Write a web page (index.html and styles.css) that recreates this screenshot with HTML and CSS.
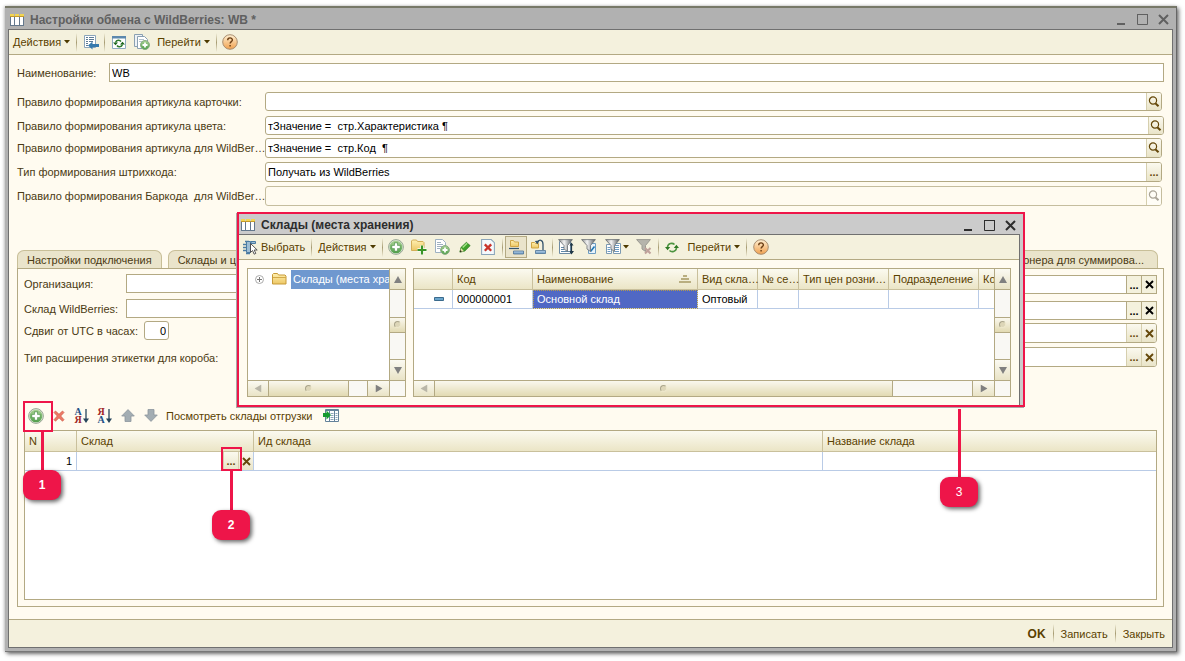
FILE: index.html
```html
<!DOCTYPE html>
<html lang="ru">
<head>
<meta charset="utf-8">
<title>Настройки обмена с WildBerries: WB</title>
<link rel="stylesheet" href="styles.css">
</head>
<body>
<svg class="sprite" aria-hidden="true">
  <defs>
    <linearGradient id="g-green" x1="0" y1="0" x2="0" y2="1"><stop offset="0" stop-color="#a9d193"/><stop offset="1" stop-color="#4f9f4a"/></linearGradient>
    <linearGradient id="g-orange" x1="0" y1="0" x2="0" y2="1"><stop offset="0" stop-color="#fff0d2"/><stop offset="1" stop-color="#f0a04e"/></linearGradient>
    <linearGradient id="g-folder" x1="0" y1="0" x2="0" y2="1"><stop offset="0" stop-color="#fff0b0"/><stop offset="1" stop-color="#edc765"/></linearGradient>
    <linearGradient id="g-blue" x1="0" y1="0" x2="0" y2="1"><stop offset="0" stop-color="#b6cfe6"/><stop offset="1" stop-color="#6f9cc4"/></linearGradient>
    <linearGradient id="g-gray" x1="0" y1="0" x2="1" y2="0"><stop offset="0" stop-color="#8c8c8c"/><stop offset=".4" stop-color="#f4f4f4"/><stop offset="1" stop-color="#555a60"/></linearGradient>
  </defs>
  <symbol id="i-table" viewBox="0 0 14 12"><path d="M0 2h14v10H0z" fill="#64788c"/><path d="M1 3h3v8H1zM5 3h4v8H5zM10 3h3v8h-3z" fill="#fff"/><path d="M0 0h4v2H0zM5 0h4v2H5zM10 0h4v2h-4z" fill="#f2d552"/><path d="M0 2h14v1H0z" fill="#c49a2c"/></symbol>
  <symbol id="i-caret" viewBox="0 0 6 4"><path d="M0 0h6L3 3.5z" fill="#4d3a00"/></symbol>
  <symbol id="i-goto" viewBox="0 0 16 16"><path d="M1.500 1.500h11v12h-11z" fill="#fff" stroke="#8aa4ba"/><path d="M3 3.500h2M6 3.500h5M3 5.500h2M6 5.500h5M3 7.500h2M6 7.500h4M3 9.500h2M3 11.500h2" stroke="#5c7a94"/><path d="M5 11.500L9.500 7.500v2.500H16v3H9.500v2.500z" fill="#3579ac"/></symbol>
  <symbol id="i-rewin" viewBox="0 0 14 13"><path d="M.5.5h13v12H.5z" fill="#fff" stroke="#8fabc2"/><path d="M0 0h14v2.500H0z" fill="#5c88ad"/><path d="M3.500 6.500c1-3 4.500-2.500 5.500-1M10.500 8.500c-1 3-4.500 2.500-5.500 1" fill="none" stroke="#2b7a2b" stroke-width="1.500"/><path d="M1 6.500h5L3.500 9.300zM8 8.500h5L10.500 5.700z" fill="#1c651c"/></symbol>
  <symbol id="i-docs" viewBox="0 0 16 16"><path d="M.5.5h8v12h-8z" fill="#eef2f6" stroke="#8aa0b2"/><path d="M3.500 2.500h7l3 3v9h-10z" fill="#fff" stroke="#8aa0b2"/><path d="M5 5.500h5M5 7.500h5" stroke="#b3c2ce"/><circle cx="11" cy="11" r="4.500" fill="url(#g-green)" stroke="#8aae86"/><path d="M8.500 11h5M11 8.500v5" stroke="#fff" stroke-width="1.800"/></symbol>
  <symbol id="i-help" viewBox="0 0 16 16"><circle cx="8" cy="8" r="7.300" fill="url(#g-orange)" stroke="#a98e70"/><path d="M5.700 6.200c0-3 4.700-3 4.700-.2 0 1.600-2.300 1.700-2.300 3.600M8.100 11v1.500" fill="none" stroke="#6b3e14" stroke-width="1.400"/></symbol>
  <symbol id="i-mag" viewBox="0 0 12 12"><circle cx="5" cy="4.500" r="3.600" fill="none" stroke="currentColor" stroke-width="1.200"/><path d="M7.300 7.200L10.500 10.300" stroke="currentColor" stroke-width="2"/></symbol>
  <symbol id="i-x" viewBox="0 0 9 9"><path d="M1 1l7 7M8 1L1 8" stroke="currentColor" stroke-width="1.900"/></symbol>
  <symbol id="i-plus" viewBox="0 0 16 16"><circle cx="8" cy="8" r="7.400" fill="#dfe8d6" stroke="#8f9f8c" stroke-width=".9"/><circle cx="8" cy="8" r="6.300" fill="url(#g-green)"/><path d="M3.600 8h8.800M8 3.600v8.800" stroke="#5a9a55" stroke-width="4"/><path d="M4.200 8h7.600M8 4.200v7.600" stroke="#fff" stroke-width="2.400"/></symbol>
  <symbol id="i-del" viewBox="0 0 12 12"><path d="M1 2.500L2.500 1 6 4.300 9.500 1 11 2.500 7.700 6 11 9.700 9.500 11.200 6 7.800 2.500 11.200 1 9.700 4.300 6z" fill="#ee7a66" stroke="#cc5544" stroke-width=".7"/></symbol>
  <symbol id="i-down" viewBox="0 0 6 16"><path d="M3 1v12" stroke="#26455c" stroke-width="1.300"/><path d="M0 10.500h6L3 15z" fill="#26455c"/></symbol>
  <symbol id="i-up-arrow" viewBox="0 0 14 13"><path d="M7 .6L13.300 7H10v5.500H4V7H.7z" fill="#a3adb3" stroke="#8b969d" stroke-width=".8"/></symbol>
  <symbol id="i-grid-go" viewBox="0 0 16 14"><path d="M2.500.5h13v12h-13z" fill="#fff" stroke="#64829a"/><path d="M2 1.500h14M6.500 1v12M11.500 1v12" stroke="#64829a"/><path d="M7.500 4.500h3M7.500 6.500h3M7.500 8.500h3M7.500 10.500h3M12.500 4.500h2M12.500 6.500h2M12.500 8.500h2M12.500 10.500h2" stroke="#8da5b8"/><path d="M0 4h3.500V1.500L8 6l-4.500 4.500V8H0z" fill="#159a2f"/></symbol>
  <symbol id="i-pick" viewBox="0 0 15 15"><path d="M0 4.500h4M0 7.500h4M0 10.500h4M2 1.500h4M3 13.500h4" stroke="#4a7ba2" stroke-width="1.600"/><path d="M3.500 1.500h4v11h-4z" fill="#9dbdd4" stroke="#4a7ba2"/><path d="M8 1.500h4.500v2H8z" fill="#9dbdd4" stroke="#4a7ba2"/><path d="M7.500 3.500v9l2-2 1.700 3.700 1.600-.8-1.600-3.400h3z" fill="#fff" stroke="#444" stroke-width=".9"/></symbol>
  <symbol id="i-folder" viewBox="0 0 15 12"><path d="M.5 11V1.500l1-1h4l1 1.500h6.500l1 1V11z" fill="url(#g-folder)" stroke="#c79a38"/><path d="M1 4.500h13" stroke="#d3aa4a"/></symbol>
  <symbol id="i-folder-add" viewBox="0 0 16 15"><path d="M.5 11V1.500l1-1h4l1 1.500H12l1 1V11z" fill="url(#g-folder)" stroke="#d3ae58"/><path d="M6.500 10.500h9M11 6v9" stroke="#fff" stroke-width="3.600"/><path d="M6.500 10.500h9M11 6v9" stroke="#3a9427" stroke-width="2.200"/></symbol>
  <symbol id="i-doc-add" viewBox="0 0 16 16"><path d="M1.500.5h7l3 3v10h-10z" fill="#fff" stroke="#9db1c2"/><path d="M3 3.500h4M3 5.500h6M3 7.500h5M3 9.500h3" stroke="#9fb1c0"/><circle cx="11" cy="11" r="4.400" fill="url(#g-green)" stroke="#8aae86"/><path d="M8.500 11h5M11 8.500v5" stroke="#fff" stroke-width="1.800"/></symbol>
  <symbol id="i-pencil" viewBox="0 0 13 13"><path d="M1 12l1.200-5L8 1.500 12 5l-6 6z" fill="#3fa32c" stroke="#2d7d22"/><path d="M4 7l4.800-4.500" stroke="#a5e588" stroke-width="1.600"/><path d="M2.200 7.500L5.500 11 1 12z" fill="#e8e4b0"/><path d="M.8 12.200l.7-2.400 1.700 1.700z" fill="#302818"/></symbol>
  <symbol id="i-doc-x" viewBox="0 0 13 15"><path d="M.5.5h9l3 3v11H.5z" fill="#f5f9fc" stroke="#8ba5ba"/><path d="M3.500 5l6 6M9.500 5l-6 6" stroke="#c9332a" stroke-width="2.200"/></symbol>
  <symbol id="i-hier" viewBox="0 0 16 16"><path d="M2.500 7.500v-6h3l1 1.500h4v4.500z" fill="url(#g-folder)" stroke="#cfa545"/><path d="M1 9.500h10" stroke="#35546c" stroke-width="1.200"/><path d="M5.500 12h10v3h-10z" fill="url(#g-blue)" stroke="#4b7297" stroke-width=".8"/></symbol>
  <symbol id="i-parent" viewBox="0 0 16 16"><path d="M1.500 9V3.500h3l1 1h3V9z" fill="url(#g-folder)" stroke="#cfa545"/><path d="M7.500 3.500c1.500-3.500 5.500-3 5.500 2V11" fill="none" stroke="#35546c" stroke-width="1.300"/><path d="M4.800 2l4.400-.5L7.500 5.500z" fill="#35546c"/><path d="M5.500 11.500h10v3h-10z" fill="url(#g-blue)" stroke="#4b7297" stroke-width=".8"/></symbol>
  <symbol id="i-f-sort" viewBox="0 0 16 16"><path d="M1.500 2.500h11v12h-11z" fill="#fff" stroke="#6c8aa4"/><path d="M3 8.500h3M3 10.500h3M3 12.500h8" stroke="#5f87a8"/><path d="M.6.600h13.800L9.500 6.500v6L6 10V6.500z" fill="url(#g-gray)" stroke="#666b70" stroke-width=".8"/><path d="M13.500 5v8" stroke="#203746" stroke-width="1.200"/><path d="M11 12h5l-2.500 3.500zM11.500 6.500h4l-2-3z" fill="#203746"/></symbol>
  <symbol id="i-f-edit" viewBox="0 0 16 16"><path d="M7.500 4.500h7v10h-7z" fill="#e8f3fb" stroke="#6c9cc2"/><path d="M9.500 12.500l4-5" stroke="#1f77b5" stroke-width="1.600"/><path d="M.6.600h13.800L9.500 6.500v6L6 10V6.500z" fill="url(#g-gray)" stroke="#666b70" stroke-width=".8"/></symbol>
  <symbol id="i-f-list" viewBox="0 0 16 16"><path d="M1.500 5.500h5v9h-5zM8.500 4.500h7v10h-7z" fill="#fff" stroke="#7c9ab2"/><path d="M2.500 8.500h3M2.500 10.500h3M2.500 12.500h3M10 6.500h4M10 8.500h4M10 10.500h4M10 12.500h4" stroke="#6a9ac2"/><path d="M.6.600h13.800L9.500 6.500v6L6 10V6.500z" fill="url(#g-gray)" stroke="#666b70" stroke-width=".8"/></symbol>
  <symbol id="i-f-off" viewBox="0 0 16 16"><path d="M.6.600h13.800L9.500 6.500v6L6 10V6.500z" fill="#b5b4ac" stroke="#9b9a92"/><path d="M9 9l5.500 5.500M14.500 9L9 14.500" stroke="#bfa19b" stroke-width="2"/></symbol>
  <symbol id="i-refresh" viewBox="0 0 14 12"><path d="M2.500 5.500c.5-4 5-4.500 7-2.500M11.500 6.500c-.5 4-5 4.500-7 2.500" fill="none" stroke="#4c9440" stroke-width="1.600"/><path d="M0 5.500h5.200L2.600 8.800zM8.800 6.500H14l-2.600-3.300z" fill="#2e7a24"/></symbol>
  <symbol id="i-min" viewBox="0 0 11 11"><path d="M1 10h8" stroke="currentColor" stroke-width="2"/></symbol>
  <symbol id="i-max" viewBox="0 0 11 11"><path d="M.5.5h10v10H.5z" fill="none" stroke="currentColor"/><path d="M0 .5h11" stroke="currentColor" stroke-width="1"/></symbol>
  <symbol id="i-close" viewBox="0 0 11 11"><path d="M1 1l9 9M10 1l-9 9" stroke="currentColor" stroke-width="2"/></symbol>
  <symbol id="i-tri" viewBox="0 0 8 7"><path d="M0 7h8L4 0z" fill="currentColor"/></symbol>
  <symbol id="i-expand" viewBox="0 0 9 9"><circle cx="4.500" cy="4.500" r="4" fill="#fff" stroke="#aaa"/><path d="M2 4.500h5M4.500 2v5" stroke="#777"/></symbol>
  <symbol id="i-asc" viewBox="0 0 12 8"><path d="M4 0h4v2H4zM2 3h8v2H2zM0 6h12v2H0z" fill="#b9ae80"/></symbol>
  <symbol id="i-item" viewBox="0 0 10 4"><path d="M.5.5h9v3h-9z" fill="#6aa5cc" stroke="#3b6a8c"/></symbol>
</svg>

<main class="window">
  <header class="titlebar">
    <svg class="title-icon"><use href="#i-table"/></svg>
    <h1>Настройки обмена с WildBerries: WB *</h1>
    <button class="win-btn" aria-label="Свернуть"><svg><use href="#i-min"/></svg></button>
    <button class="win-btn" aria-label="Развернуть"><svg><use href="#i-max"/></svg></button>
    <button class="win-btn" aria-label="Закрыть окно"><svg><use href="#i-close"/></svg></button>
  </header>
  <div class="client">
    <nav class="toolbar">
      <button class="tb-text">Действия<svg class="caret"><use href="#i-caret"/></svg></button>
      <span class="sep"></span>
      <button class="tb-icon" aria-label="Перейти к списку"><svg><use href="#i-goto"/></svg></button>
      <span class="sep"></span>
      <button class="tb-icon" aria-label="Перечитать"><svg class="s14"><use href="#i-rewin"/></svg></button>
      <button class="tb-icon" aria-label="Скопировать"><svg><use href="#i-docs"/></svg></button>
      <button class="tb-text">Перейти<svg class="caret"><use href="#i-caret"/></svg></button>
      <span class="sep"></span>
      <button class="tb-icon" aria-label="Справка"><svg><use href="#i-help"/></svg></button>
    </nav>

    <form class="form" onsubmit="return false">
      <div class="row row-name">
        <label for="name">Наименование:</label>
        <div class="field square"><input id="name" value="WB"></div>
      </div>
      <div class="rules">
        <div class="row">
          <label for="r1">Правило формирования артикула карточки:</label>
          <div class="field"><input id="r1" value=""><button aria-label="Открыть"><svg><use href="#i-mag"/></svg></button></div>
        </div>
        <div class="row row-wide">
          <label for="r2">Правило формирования артикула цвета:</label>
          <div class="field"><input id="r2" value="тЗначение =  стр.Характеристика ¶"><button aria-label="Открыть"><svg><use href="#i-mag"/></svg></button></div>
        </div>
      </div>
      <div class="rules tall">
        <div class="row">
          <label for="r3">Правило формирования артикула для WildBer…</label>
          <div class="field"><input id="r3" value="тЗначение =  стр.Код  ¶"><button aria-label="Открыть"><svg><use href="#i-mag"/></svg></button></div>
        </div>
        <div class="row">
          <label for="r4">Тип формирования штрихкода:</label>
          <div class="field"><input id="r4" value="Получать из WildBerries"><button aria-label="Выбрать">...</button></div>
        </div>
        <div class="row">
          <label for="r5">Правило формирования Баркода&nbsp; для WildBer…</label>
          <div class="field disabled"><input id="r5" disabled><button disabled aria-label="Открыть"><svg><use href="#i-mag"/></svg></button></div>
        </div>
      </div>
    </form>

    <div class="tabs">
      <button class="tab">Настройки подключения</button>
      <button class="tab tab-stock">Склады и ц</button>
      <button class="tab tab-last">онера для суммирова...</button>
    </div>

    <section class="panel">
      <div class="settings">
        <div class="col">
          <div class="row"><label class="l-org" for="org">Организация:</label><div class="field square"><input id="org"></div></div>
          <div class="row second"><label class="l-org" for="wh">Склад WildBerries:</label><div class="field square"><input id="wh"></div></div>
          <div class="row third"><label class="l-utc" for="utc">Сдвиг от UTC в часах:</label><div class="field number"><input id="utc" value="0"></div></div>
          <div class="row fourth"><span class="plain">Тип расширения этикетки для короба:</span></div>
        </div>
        <div class="col col-right">
          <div class="row"><div class="field square flat"><input aria-label="Договор"><button aria-label="Выбрать">...</button><button aria-label="Очистить"><svg class="x"><use href="#i-x"/></svg></button></div></div>
          <div class="row second"><div class="field square flat"><input aria-label="Контрагент"><button aria-label="Выбрать">...</button><button aria-label="Очистить"><svg class="x"><use href="#i-x"/></svg></button></div></div>
          <div class="row third"><div class="field"><input aria-label="Номенклатура"><button aria-label="Выбрать">...</button><button aria-label="Очистить"><svg class="x"><use href="#i-x"/></svg></button></div></div>
          <div class="row fourth"><div class="field"><input aria-label="Тип этикетки"><button aria-label="Выбрать">...</button><button aria-label="Очистить"><svg class="x"><use href="#i-x"/></svg></button></div></div>
        </div>
      </div>

      <div class="commands">
        <span class="anchor">
          <button class="tb-icon" aria-label="Добавить"><svg><use href="#i-plus"/></svg></button>
          <span class="frame frame-add"></span><span class="stem stem-add"></span><b class="badge badge-add">1</b>
        </span>
        <button class="tb-icon" aria-label="Удалить"><svg class="s12"><use href="#i-del"/></svg></button>
        <button class="tb-icon sort" aria-label="По возрастанию"><span class="letters"><i class="blue">А</i><i class="red">Я</i></span><svg class="arrow"><use href="#i-down"/></svg></button>
        <button class="tb-icon sort" aria-label="По убыванию"><span class="letters"><i class="red">Я</i><i class="blue">А</i></span><svg class="arrow"><use href="#i-down"/></svg></button>
        <button class="tb-icon" aria-label="Вверх"><svg class="s14"><use href="#i-up-arrow"/></svg></button>
        <button class="tb-icon flip" aria-label="Вниз"><svg class="s14"><use href="#i-up-arrow"/></svg></button>
        <button class="tb-text show">Посмотреть склады отгрузки<svg class="grid-go"><use href="#i-grid-go"/></svg></button>
      </div>

      <div class="grid-box">
        <table class="grid">
          <colgroup><col class="c-n"><col class="c-stock"><col class="c-id"><col></colgroup>
          <thead><tr><th>N</th><th>Склад</th><th>Ид склада</th><th>Название склада</th></tr></thead>
          <tbody><tr><td class="num">1</td><td class="edit"><div class="cell-edit">
            <span class="anchor"><button aria-label="Выбрать склад">...</button><span class="frame frame-pick"></span><span class="stem stem-pick"></span><b class="badge badge-pick">2</b></span><button aria-label="Очистить склад"><svg class="x"><use href="#i-x"/></svg></button>
          </div></td><td></td><td></td></tr></tbody>
        </table>
      </div>
    </section>

    <footer class="footer">
      <button class="ok">OK</button><span class="sep"></span><button>Записать</button><span class="sep"></span><button>Закрыть</button>
    </footer>
  </div>

  <section class="modal" role="dialog" aria-labelledby="modal-title">
    <header class="titlebar">
      <svg class="title-icon"><use href="#i-table"/></svg>
      <h2 id="modal-title">Склады (места хранения)</h2>
      <button class="win-btn" aria-label="Свернуть"><svg><use href="#i-min"/></svg></button>
      <button class="win-btn" aria-label="Развернуть"><svg><use href="#i-max"/></svg></button>
      <button class="win-btn" aria-label="Закрыть окно"><svg><use href="#i-close"/></svg></button>
    </header>
    <div class="modal-client">
      <nav class="toolbar">
        <button class="tb-text"><svg class="pick"><use href="#i-pick"/></svg>Выбрать</button>
        <span class="sep"></span>
        <button class="tb-text">Действия<svg class="caret"><use href="#i-caret"/></svg></button>
        <span class="sep"></span>
        <button class="tb-icon" aria-label="Добавить"><svg><use href="#i-plus"/></svg></button>
        <button class="tb-icon" aria-label="Новая группа"><svg><use href="#i-folder-add"/></svg></button>
        <button class="tb-icon" aria-label="Скопировать"><svg><use href="#i-doc-add"/></svg></button>
        <button class="tb-icon" aria-label="Изменить"><svg class="s12"><use href="#i-pencil"/></svg></button>
        <button class="tb-icon" aria-label="Пометить на удаление"><svg><use href="#i-doc-x"/></svg></button>
        <span class="sep"></span>
        <button class="tb-icon pressed" aria-label="Иерархия"><svg><use href="#i-hier"/></svg></button>
        <button class="tb-icon" aria-label="На уровень вверх"><svg><use href="#i-parent"/></svg></button>
        <span class="sep"></span>
        <button class="tb-icon" aria-label="Отбор и сортировка"><svg><use href="#i-f-sort"/></svg></button>
        <button class="tb-icon" aria-label="Отбор по значению"><svg><use href="#i-f-edit"/></svg></button>
        <button class="tb-icon with-caret" aria-label="История отборов"><svg><use href="#i-f-list"/></svg><svg class="caret"><use href="#i-caret"/></svg></button>
        <button class="tb-icon" aria-label="Отключить отбор"><svg><use href="#i-f-off"/></svg></button>
        <span class="sep"></span>
        <button class="tb-icon" aria-label="Обновить"><svg class="s14"><use href="#i-refresh"/></svg></button>
        <button class="tb-text">Перейти<svg class="caret"><use href="#i-caret"/></svg></button>
        <span class="sep"></span>
        <button class="tb-icon" aria-label="Справка"><svg><use href="#i-help"/></svg></button>
      </nav>
      <div class="panes">
        <div class="pane tree">
          <div class="view">
            <div class="node"><svg class="expand"><use href="#i-expand"/></svg><svg class="folder"><use href="#i-folder"/></svg><span>Склады (места хран</span></div>
          </div>
          <div class="vbar"><button aria-label="Вверх"><svg><use href="#i-tri"/></svg></button><i class="thumb"></i><button class="flip" aria-label="Вниз"><svg><use href="#i-tri"/></svg></button></div>
          <div class="hbar"><button class="left dim" aria-label="Влево"><svg><use href="#i-tri"/></svg></button><i class="thumb"></i><button class="right" aria-label="Вправо"><svg><use href="#i-tri"/></svg></button></div>
          <div class="corner"></div>
        </div>
        <div class="pane list">
          <div class="view">
            <table class="grid">
              <colgroup><col class="m-icon"><col class="m-code"><col class="m-name"><col class="m-kind"><col class="m-no"><col class="m-price"><col class="m-dep"><col></colgroup>
              <thead><tr><th></th><th>Код</th><th><span class="sorted">Наименование<svg class="asc"><use href="#i-asc"/></svg></span></th><th>Вид скла…</th><th>№ се…</th><th>Тип цен розни…</th><th>Подразделение</th><th>Ко</th></tr></thead>
              <tbody><tr><td class="mark"><svg class="item"><use href="#i-item"/></svg></td><td>000000001</td><td class="selected">Основной склад</td><td>Оптовый</td><td></td><td></td><td></td><td></td></tr></tbody>
            </table>
          </div>
          <div class="vbar"><button aria-label="Вверх"><svg><use href="#i-tri"/></svg></button><i class="thumb"></i><button class="flip" aria-label="Вниз"><svg><use href="#i-tri"/></svg></button></div>
          <div class="hbar"><button class="left dim" aria-label="Влево"><svg><use href="#i-tri"/></svg></button><i class="thumb"></i><button class="right" aria-label="Вправо"><svg><use href="#i-tri"/></svg></button></div>
          <div class="corner"></div>
        </div>
      </div>
    </div>
    <span class="stem stem-modal"></span><b class="badge badge-modal">3</b>
  </section>
</main>
</body>
</html>
```
FILE: styles.css
```css
:root {
  --line: #b3a983;
  --cream: #fffbf0;
  --bar: #f4f1dd;
  --ink: #4a3a12;
  --brown: #5a4100;
  --red: #ee1549;
  --cell: #b9cbe6;
}

* { box-sizing: border-box; }

body {
  margin: 0;
  background: #fff;
  color: var(--ink);
  font: 11px/14px "Liberation Sans", Arial, sans-serif;
}

button, input {
  margin: 0;
  padding: 0;
  border: 0;
  background: none;
  color: inherit;
  font: inherit;
}

svg { display: block; flex: none; width: 16px; height: 16px; }
.sprite { position: absolute; width: 0; height: 0; }

/* window */
.window {
  position: relative;
  display: flex;
  flex-direction: column;
  min-height: calc(100vh - 15px);
  margin: 6px 8px 9px 5px;
  padding: 0 3px 3px;
  border-top: 2px solid #777868;
  border-right: 1px solid #666;
  border-bottom: 1px solid #777;
  background: #b1b1b1;
  box-shadow: 2px 2px 4px rgba(0, 0, 0, .55), -1px 0 3px rgba(0, 0, 0, .2);
}

.titlebar {
  display: flex;
  align-items: center;
  gap: 10px;
  height: 21px;
  padding: 2px 4px 0 2px;
  color: #606060;
}

.titlebar h1, .titlebar h2 {
  flex: 1;
  margin: 0;
  font: bold 12px/16px "Liberation Sans", Arial, sans-serif;
}

.title-icon { width: 14px; height: 12px; margin-right: -4px; }
.win-btn svg { width: 11px; height: 11px; }

.client {
  display: flex;
  flex: 1;
  flex-direction: column;
  border: 1px solid #707070;
  background: var(--cream);
}

/* toolbars */
.toolbar {
  display: flex;
  align-items: center;
  height: 25px;
  border-bottom: 1px solid var(--line);
  background: var(--bar);
}

.tb-text {
  display: flex;
  align-items: center;
  gap: 3px;
  padding: 0 4px;
  color: var(--brown);
  white-space: nowrap;
}

.tb-icon {
  display: flex;
  align-items: center;
  justify-content: center;
  width: 23px;
  height: 22px;
}

.caret { width: 6px; height: 4px; }
.s14 { width: 14px; height: 13px; }
.s12 { width: 12px; height: 12px; }
.flip svg { transform: rotate(180deg); }
.sep {
  width: 1px;
  height: 19px;
  margin: 0 2px;
  background: linear-gradient(#f4f1dd, #a89d74, #f4f1dd);
}

/* form */
.form { padding: 8px 8px 0; }
.row { display: flex; align-items: center; height: 19px; }
.row-name label { flex: 0 0 92px; }
.rules { display: grid; gap: 5px; margin-top: 10px; }
.rules.tall { gap: 4px; margin-top: 3px; }
.rules .row { padding-right: 2px; }
.rules .row-wide { padding-right: 0; }
.rules.tall .row { height: 20px; }
.rules label { flex: 0 0 248px; width: 248px; white-space: nowrap; }

.field {
  display: flex;
  flex: 1;
  align-self: stretch;
  min-width: 0;
  border: 1px solid var(--line);
  border-radius: 3px;
  background: #fff;
  overflow: hidden;
}

.field.square { border-radius: 0; }
.field input { flex: 1; min-width: 0; padding: 0 2px; color: #000; }

.field button, .cell-edit button {
  display: flex;
  align-items: center;
  justify-content: center;
  width: 15px;
  border-left: 1px solid #d6cfae;
  background: linear-gradient(#fbf9ef, #e9e4c8);
  color: #65480a;
  font-weight: bold;
}

.field button svg { width: 12px; height: 12px; }
.field .x, .cell-edit .x { width: 9px; height: 9px; }
.field button .x { width: 9px; height: 9px; }
.field.flat button { border-color: var(--line); background: var(--bar); color: #000; }
.field.disabled { border-color: #c5bd9e; background: var(--cream); }
.field.disabled button { color: #aaa497; background: #fffdf6; }

/* tabs */
.tabs { display: flex; gap: 6px; margin: 44px 14px 0 8px; }
.tab {
  height: 18px;
  padding: 0 9px;
  border: 1px solid #c8bf98;
  border-bottom: 0;
  border-radius: 7px 7px 0 0;
  background: #eae4cb;
  white-space: nowrap;
}
.tab-stock { padding-right: 40px; }
.tab-last { margin-left: auto; padding-right: 13px; padding-left: 24px; }

.panel {
  display: flex;
  flex: 1;
  flex-direction: column;
  margin: 0 8px 12px;
  padding: 5px 6px 6px;
  border: 1px solid var(--line);
}

.settings { display: grid; grid-template-columns: 1fr 1fr; gap: 20px; height: 127px; }
.col-right { padding-top: 1px; }
.second { margin-top: 6px; }
.third { margin-top: 3px; }
.fourth { margin-top: 8px; }
.col-right .second { margin-top: 7px; }
.col-right .third { height: 20px; }
.col-right .fourth { height: 20px; margin-top: 4px; }
.l-org { flex: 0 0 102px; }
.l-utc { flex: 0 0 120px; }
.field.number { flex: 0 0 25px; }
.number input { text-align: right; }

.commands { display: flex; align-items: center; height: 29px; }
.anchor { position: relative; display: flex; }
.sort { gap: 1px; }
.letters { display: grid; }
.letters i { font: bold 10px/8px "Liberation Serif", serif; }
.blue { color: #1f4f86; }
.red { color: #a02525; }
.arrow { width: 6px; height: 16px; }
.show { gap: 11px; }
.grid-go { width: 16px; height: 14px; }

/* tables */
.grid-box { flex: 1; border: 1px solid var(--line); background: #fff; }
.grid { width: 100%; border-collapse: separate; border-spacing: 0; table-layout: fixed; }
.grid th {
  height: 21px;
  padding: 0 4px;
  border-right: 1px solid #c9c09c;
  border-bottom: 1px solid #c9c09c;
  background: linear-gradient(#fbfaf0, #ebe5c6);
  color: var(--brown);
  font-weight: normal;
  text-align: left;
  white-space: nowrap;
}
.grid td {
  height: 19px;
  padding: 0 4px;
  border-right: 1px solid var(--cell);
  border-bottom: 1px solid var(--cell);
  color: #000;
  white-space: nowrap;
}
.grid th:last-child, .grid td:last-child { border-right: 0; }
.grid .num { text-align: right; }
.grid .edit { padding: 0; }
.cell-edit { display: flex; justify-content: flex-end; height: 18px; }
.cell-edit button { height: 18px; }
.c-n { width: 52px; }
.c-stock { width: 177px; }
.c-id { width: 569px; }

.footer {
  display: flex;
  align-items: center;
  justify-content: flex-end;
  gap: 5px;
  height: 28px;
  padding-right: 7px;
  border-top: 1px solid var(--line);
  background: var(--bar);
  color: var(--brown);
}
.footer .ok { font-size: 12px; font-weight: bold; }

/* dialog */
.modal {
  position: absolute;
  top: 204px;
  right: 151px;
  left: 232px;
  border: 2px solid var(--red);
  padding-right: 3px;
  background: #cbcbcb;
  box-shadow: -1px 1px 0 #a8a8a8;
}
.modal .titlebar { height: 20px; color: #2d2d2d; }
.modal-client {
  border-top: 1px solid #707070;
  border-right: 1px solid #707070;
  background: var(--cream);
}
.pick { width: 15px; height: 15px; }
.pressed { width: 22px; border: 1px solid var(--line); background: #eae4cb; }
.with-caret { width: 32px; gap: 2px; }

.panes { display: flex; gap: 7px; padding: 8px; }
.pane {
  display: grid;
  grid-template-columns: minmax(0, 1fr) 16px;
  grid-template-rows: 111px 16px;
  border: 1px solid var(--line);
  background: #fff;
}
.tree { flex: 0 0 159px; }
.list { flex: 1; min-width: 0; }
.view { overflow: hidden; }
.node { display: flex; align-items: center; height: 20px; padding-left: 7px; }
.expand { width: 9px; height: 9px; margin-right: 8px; }
.folder { width: 15px; height: 12px; margin-right: 4px; }
.node span { flex: 1; min-width: 0; overflow: hidden; padding: 2px 0 2px 2px; background: #6f98cf; color: #fff; line-height: 15px; white-space: nowrap; }

.vbar, .hbar { display: flex; justify-content: space-between; background: #f9f8f4; }
.vbar { flex-direction: column; border-left: 1px solid var(--line); }
.hbar { border-top: 1px solid var(--line); }
.corner { border: solid var(--line); border-width: 1px 0 0 1px; background: #f9f8f4; }
.vbar button, .hbar button {
  display: flex;
  align-items: center;
  justify-content: center;
  background: linear-gradient(#fbfaf2, #e9e3c6);
  color: #808080;
}
.vbar button { height: 21px; border-bottom: 1px solid var(--line); }
.vbar .flip { border-top: 1px solid var(--line); border-bottom: 0; }
.hbar button { width: 21px; border-right: 1px solid var(--line); }
.hbar .right { width: 22px; border-right: 0; border-left: 1px solid var(--line); }
.vbar svg, .hbar svg { width: 8px; height: 7px; }
.left svg { transform: rotate(-90deg); }
.right svg { transform: rotate(90deg); }
.hbar .dim { color: #b9b6a8; }
.thumb {
  display: flex;
  align-items: center;
  justify-content: center;
  background: linear-gradient(#faf8ee, #e2dab2);
}
.thumb::after {
  width: 5px;
  height: 5px;
  border: 1px solid #c9c3a6;
  border-color: #aaa58c #eee8cc #eee8cc #aaa58c;
  border-radius: 50%;
  background: #ddd6b8;
  content: "";
}
.vbar .thumb { height: 16px; border: solid var(--line); border-width: 1px 0; }
.hbar .thumb { flex: 0 0 80px; margin-right: auto; border-right: 1px solid var(--line); }
.list .hbar .thumb { flex: 0 0 79%; }

.m-icon { width: 39px; }
.m-code { width: 80px; }
.m-name { width: 165px; }
.m-kind { width: 60px; }
.m-no { width: 41px; }
.m-price, .m-dep { width: 90px; }
.grid .selected { outline: 1px dotted #b59a4a; outline-offset: -1px; background: #5068c4; color: #fff; }
.sorted { display: flex; align-items: center; justify-content: space-between; }
.asc { width: 12px; height: 8px; margin-right: 2px; }
.grid .mark { padding-left: 20px; }
.item { width: 10px; height: 4px; }
.list .grid th:last-child, .list .grid td:last-child { padding-right: 0; }

/* callouts */
.frame, .stem, .badge { position: absolute; z-index: 2; }
.frame { border: 2px solid var(--red); pointer-events: none; }
.stem { width: 3px; background: var(--red); }
.badge {
  display: flex;
  align-items: center;
  justify-content: center;
  width: 38px;
  height: 30px;
  border-radius: 9px;
  background: var(--red);
  box-shadow: 2px 2px 4px rgba(0, 0, 0, .6);
  color: #fff;
  font-size: 12px;
}
.frame-add { top: -4px; left: -1px; width: 30px; height: 31px; }
.stem-add { top: 26px; left: 17px; height: 40px; }
.badge-add { top: 65px; left: -1px; }
.frame-pick { top: -5px; left: -2px; width: 21px; height: 24px; }
.stem-pick { top: 18px; left: 7px; height: 40px; }
.badge-pick { top: 58px; left: -11px; }
.stem-modal { top: 195px; right: 62px; height: 70px; }
.badge-modal { top: 263px; right: 45px; font-weight: normal; }
```
